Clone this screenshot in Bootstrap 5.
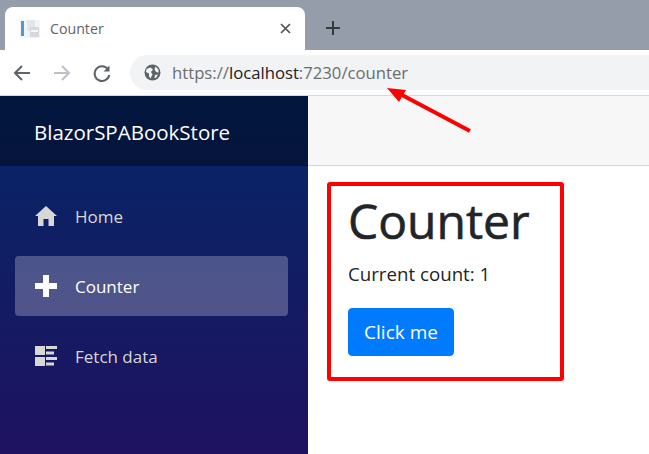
<!DOCTYPE html>
<html lang="en"><head><meta charset="utf-8"><title>Counter</title>
<link href="https://cdn.jsdelivr.net/npm/bootstrap@5.3.0/dist/css/bootstrap.min.css" rel="stylesheet">
<style>
html,body{height:454px;overflow:hidden}
body{font-family:"Open Sans","Noto Sans",sans-serif;position:relative;width:649px;background:#fff}
.tabstrip{height:50px;background:#959dab;padding:7px 0 0 5px}
.browser-tab{width:300px;height:43px;background:#fff;border-radius:8px 8px 0 0;padding:0 14px 0 15px;color:#5f6368;font-size:14.2px}
.tab-ttl{margin-left:10px;color:#5f6368}
.newtab{margin-left:20px;margin-top:-1px}
.toolbar{height:46px;background:#fff;border-bottom:1px solid #d9d9d9;padding:5px 0 5px 12px}
.navicons{gap:20px;width:118px}
.addr{height:35px;border-radius:18px 0 0 18px;background:#f1f3f4;padding-left:14px;font-size:16.7px;color:#6a6d70}
.addr b{font-weight:400;color:#202124}
.addr svg{margin-right:11px}
.app{height:358px}
.sidebar{width:308px;background:linear-gradient(180deg,#052767 0%,#1f1260 100%)}
.brandbar{height:70px;background:rgba(0,0,0,.4);color:#fff;padding:2px 0 0 34px;font-size:20.5px}
.sidenav{padding-top:20px}
.sidelink{height:60px;margin:0 20px 10px 15px;padding-left:20px;border-radius:4px;color:#d7d7d7;font-size:17px;text-decoration:none}
.sidelink.is-on{background:rgba(255,255,255,.25);color:#fff}
.sidelink svg{margin-right:18px;flex:none}
.sidelabel{position:relative;top:1px}
.mainpane{min-width:0}
.topbar{height:70px;background:#f7f7f7;border-bottom:1px solid #d6d5d5}
.article{padding:26px 0 0 40px;color:#212529}
.article h1{font-size:48px;line-height:58px;margin:0 0 11px;font-weight:500;-webkit-text-stroke:.6px #212529}
.article p{font-size:18.7px;line-height:26px;margin:0 0 21px}
.clickbtn{background:#007bff;border-color:#007bff;font-size:19px;height:48px;width:106px;padding:0;color:#fff;border-radius:4px}
.annot-box{position:absolute;left:327px;top:182px;width:237px;height:199px;border:4px solid #f00;border-radius:3px;pointer-events:none}
.annot-arrow{position:absolute;left:380px;top:80px;pointer-events:none}
</style></head><body>
<div class="tabstrip d-flex">
 <div class="browser-tab d-flex align-items-center">
  <svg width="20" height="20" viewBox="0 0 20 20"><rect x="0" y="1" width="20" height="18" fill="#f3f4f6"/><rect x="1" y="2" width="3" height="15" fill="#4b9bd5"/><rect x="7" y="1" width="8" height="11" fill="#e3e6ea"/><rect x="10" y="8" width="9" height="10" fill="#d5d9de"/><rect x="11" y="11" width="7" height="2" fill="#f5f6f7"/></svg>
  <span class="tab-ttl flex-grow-1">Counter</span>
  <svg width="11" height="11" viewBox="0 0 11 11"><path d="M1 1 10 10M10 1 1 10" stroke="#4f5256" stroke-width="1.7"/></svg>
 </div>
 <svg class="newtab align-self-center" width="16" height="16" viewBox="0 0 16 16"><path d="M8 1V15M1 8H15" stroke="#36393d" stroke-width="2"/></svg>
</div>
<div class="toolbar d-flex align-items-center">
 <div class="navicons d-flex align-items-center">
  <svg width="20" height="20" viewBox="0 0 20 20"><path d="M18 10H3M10 3 3 10l7 7" fill="none" stroke="#5f6368" stroke-width="2"/></svg>
  <svg width="20" height="20" viewBox="0 0 20 20"><path d="M2 10H17M10 3l7 7-7 7" fill="none" stroke="#bdc1c6" stroke-width="2"/></svg>
  <svg width="20" height="20" viewBox="0 0 20 20"><path d="M16 6.200A7.400 7.400 0 1 0 17.300 12" fill="none" stroke="#5f6368" stroke-width="2"/><path d="M17.500 2.500V8.500H11.500Z" fill="#5f6368"/></svg>
 </div>
 <div class="addr flex-grow-1 d-flex align-items-center">
  <svg width="17" height="17" viewBox="0 0 17 17"><circle cx="8.500" cy="8.500" r="8" fill="#5f6368"/><path d="M2.500 5 6.500 3.500 9 5.500 7 8 8.500 10.500 6.500 14.500 5 12.500V9.500L2 8ZM11.500 2.500 14.500 5.500V8.500L12 8 10.500 5.500ZM11 11 14 10.500 12 14 10.500 14Z" fill="#f1f3f4"/></svg>
  <span>https://<b>localhost</b>:7230/counter</span>
 </div>
</div>
<div class="app d-flex">
 <nav class="sidebar flex-shrink-0">
  <div class="brandbar d-flex align-items-center">BlazorSPABookStore</div>
  <div class="sidenav">
   <a class="sidelink d-flex align-items-center" href="#"><svg width="22" height="20" viewBox="0 0 22 20"><path d="M11 0 22 10H19V20H13.500V13H8.500V20H3V10H0Z" fill="#d7d7d7"/></svg><span class="sidelabel">Home</span></a>
   <a class="sidelink is-on d-flex align-items-center" href="#"><svg width="22" height="22" viewBox="0 0 22 22"><path d="M8 0H14V8H22V14H14V22H8V14H0V8H8Z" fill="#fff"/></svg><span class="sidelabel">Counter</span></a>
   <a class="sidelink d-flex align-items-center" href="#"><svg width="22" height="20" viewBox="0 0 22 20" fill="#d7d7d7"><rect width="10" height="9"/><rect y="11" width="10" height="9"/><rect x="11" width="11" height="3"/><rect x="11" y="5.500" width="8" height="3"/><rect x="11" y="11" width="11" height="3"/><rect x="11" y="16.500" width="8" height="3"/></svg><span class="sidelabel">Fetch data</span></a>
  </div>
 </nav>
 <main class="mainpane flex-grow-1">
  <div class="topbar"></div>
  <div class="article">
   <h1>Counter</h1>
   <p>Current count: 1</p>
   <button class="btn clickbtn" type="button">Click me</button>
  </div>
 </main>
</div>
<div class="annot-box"></div>
<svg class="annot-arrow" width="100" height="60" viewBox="0 0 100 60"><path d="M90 51 22 15" stroke="#f00" stroke-width="4"/><path d="M7 8 26 10 19 22Z" fill="#f00"/></svg>
<script src="https://cdn.jsdelivr.net/npm/bootstrap@5.3.0/dist/js/bootstrap.bundle.min.js"></script>
</body></html>
